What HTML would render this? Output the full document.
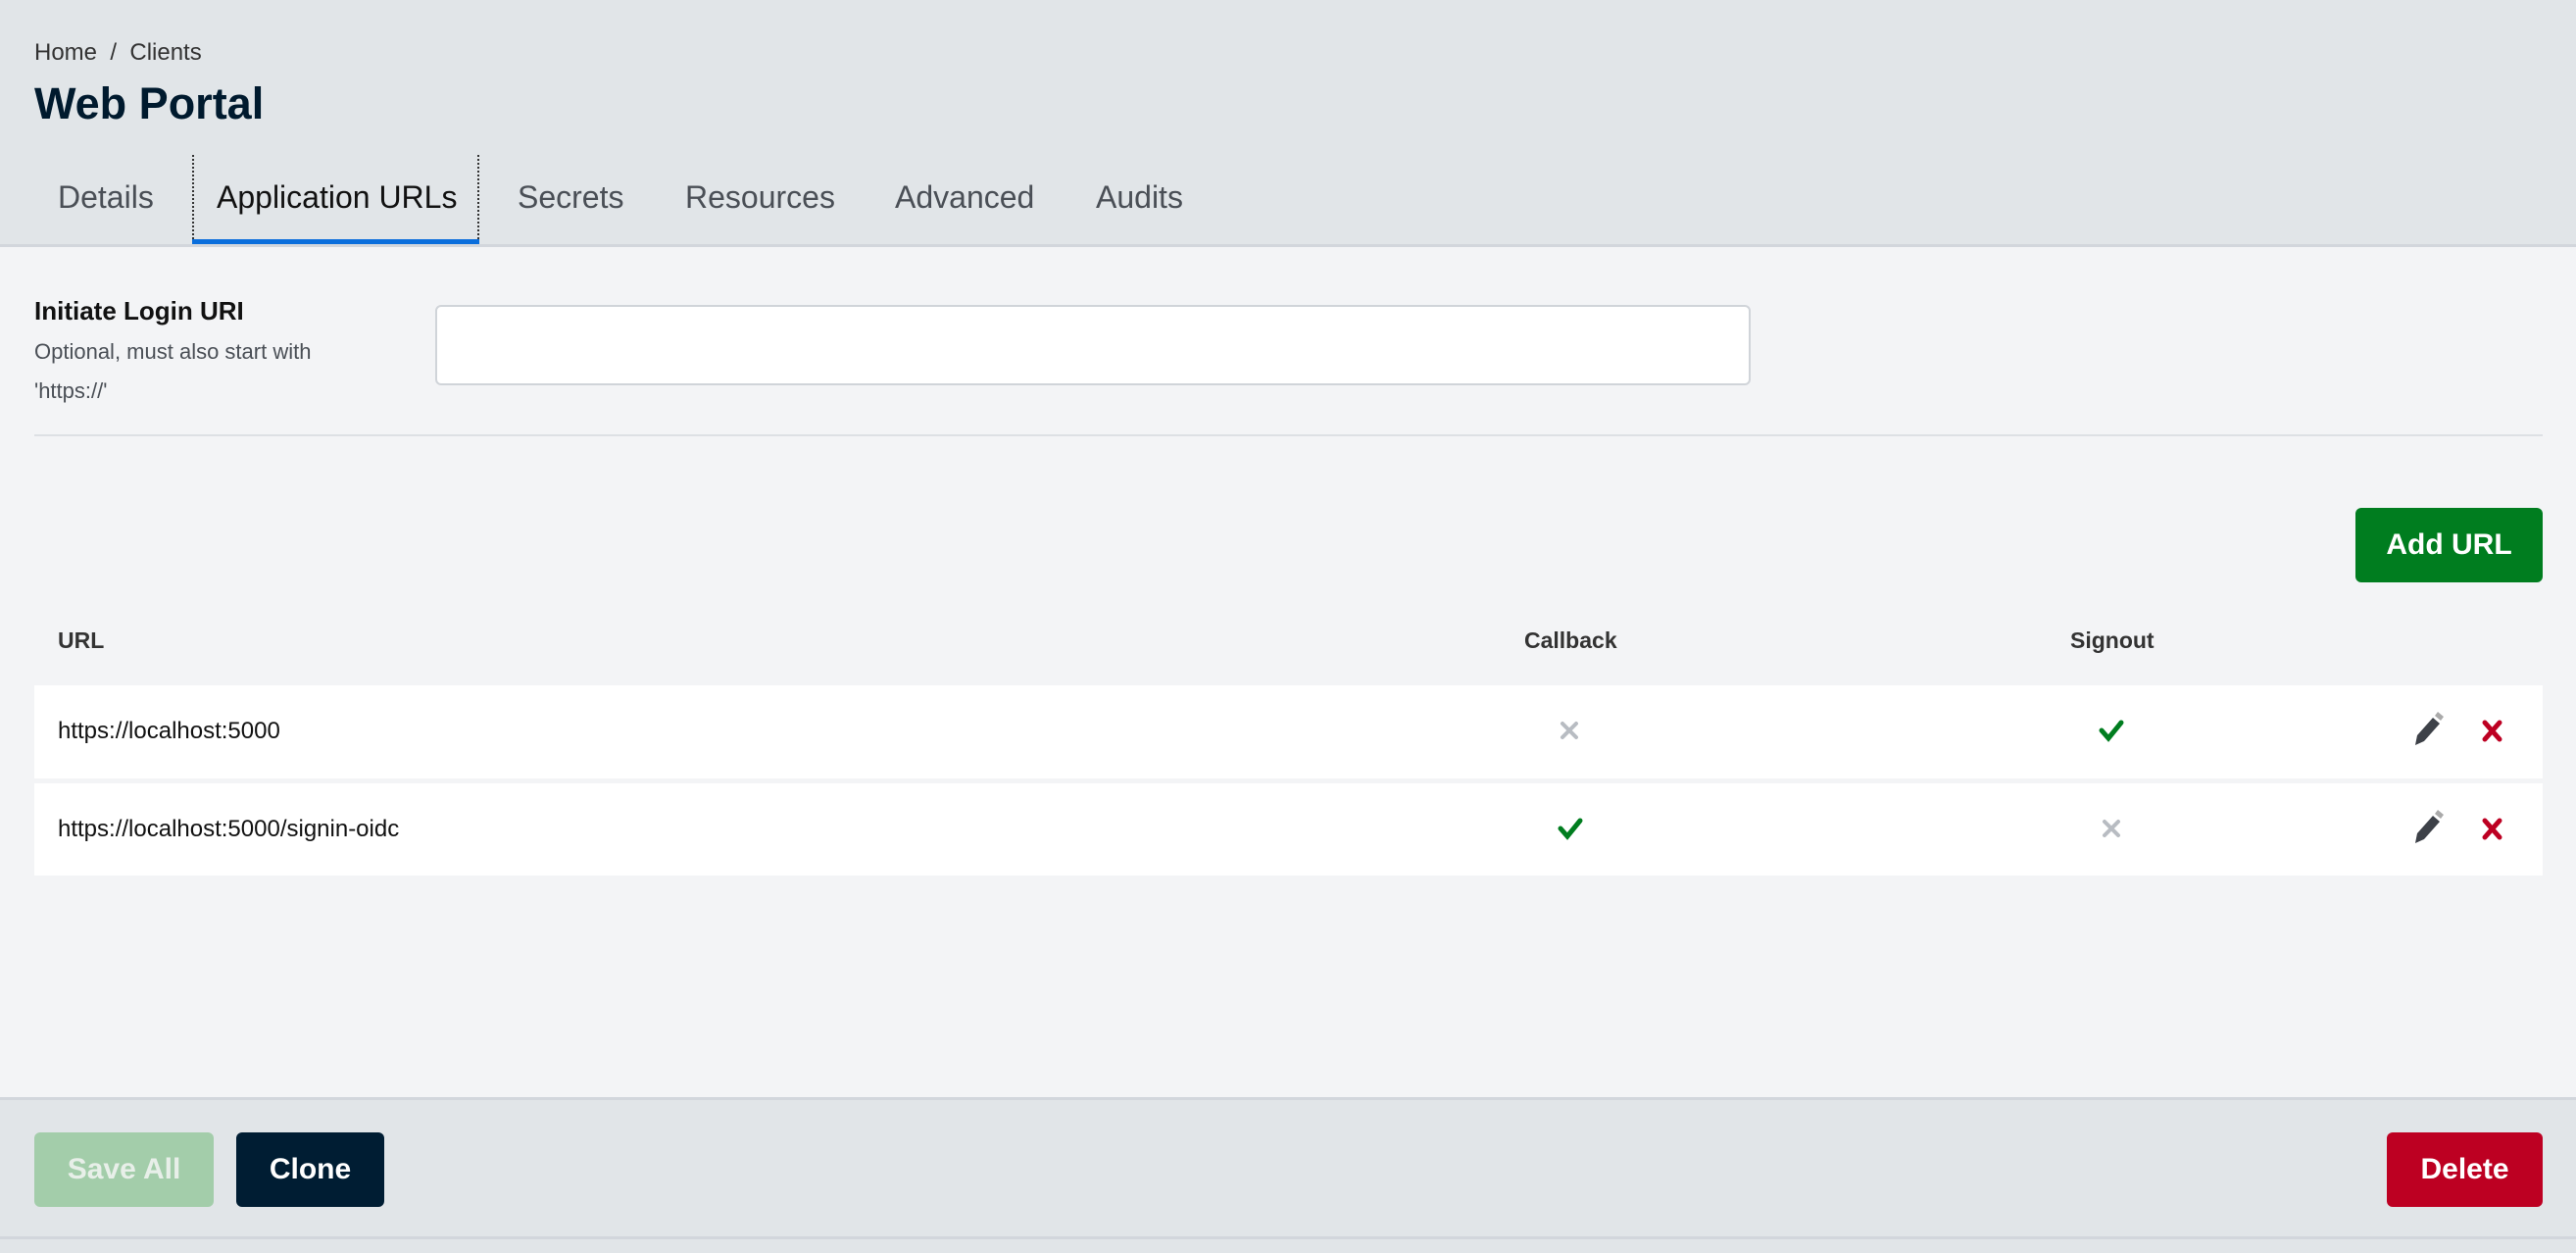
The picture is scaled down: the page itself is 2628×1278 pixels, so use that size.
<!DOCTYPE html>
<html><head><meta charset="utf-8"><style>
*{box-sizing:border-box;margin:0;padding:0}
body{width:2628px;height:1278px;font-family:"Liberation Sans",Arial,sans-serif;background:#e1e5e8;position:relative;overflow:hidden;color:#001a2e}
.abs{position:absolute;white-space:nowrap}
#hdr{position:absolute;left:0;top:0;width:2628px;height:252px;background:#e1e5e8;border-bottom:3px solid #d2d6dc}
#main{position:absolute;left:0;top:252px;width:2628px;height:868px;background:#f3f4f6}
#foot{position:absolute;left:0;top:1119px;width:2628px;height:145px;background:#e1e5e8;border-top:3px solid #d2d6dc;border-bottom:3px solid #d2d6dc}
.tab{position:absolute;top:183px;font-size:32px;color:#4a4f56}
.btn{position:absolute;color:#fff;font-weight:bold;font-size:30px;border-radius:6px;display:flex;align-items:center;justify-content:center}
.th{position:absolute;top:640px;font-size:23px;font-weight:bold;color:#333}
.row{position:absolute;left:35px;width:2559px;background:#fff}
.url{position:absolute;left:24px;font-size:24px;color:#111}
</style></head><body>
<div id="hdr"></div>
<div class="abs" style="left:35px;top:40px;font-size:24px;color:#333">Home &nbsp;/&nbsp; Clients</div>
<div class="abs" style="left:35px;top:80px;font-size:45px;font-weight:bold;color:#001a2e">Web Portal</div>
<div class="tab" style="left:59px">Details</div>
<div style="position:absolute;left:196px;top:158px;width:293px;height:90px;border-left:2px dotted #333;border-right:2px dotted #333"></div>
<div style="position:absolute;left:196px;top:244px;width:293px;height:5px;background:#0a6edc"></div>
<div class="tab" style="left:221px;color:#111">Application URLs</div>
<div class="tab" style="left:528px">Secrets</div>
<div class="tab" style="left:699px">Resources</div>
<div class="tab" style="left:913px">Advanced</div>
<div class="tab" style="left:1118px">Audits</div>
<div id="main"></div>
<div class="abs" style="left:35px;top:302px;font-size:26px;font-weight:bold;color:#111">Initiate Login URI</div>
<div class="abs" style="left:35px;top:339px;font-size:22px;color:#4a4f56;line-height:40px;white-space:normal;width:340px">Optional, must also start with 'https://'</div>
<div style="position:absolute;left:444px;top:311px;width:1342px;height:82px;background:#fff;border:2px solid #d0d4d9;border-radius:6px"></div>
<div style="position:absolute;left:35px;top:443px;width:2559px;height:2px;background:#dde0e4"></div>
<div class="btn" style="left:2403px;top:518px;width:191px;height:76px;background:#007d1f">Add URL</div>
<div class="th" style="left:59px">URL</div>
<div class="th" style="left:1555px">Callback</div>
<div class="th" style="left:2112px">Signout</div>
<div class="row" style="top:699px;height:95px"><div class="url" style="top:33px">https://localhost:5000</div></div>
<div class="row" style="top:799px;height:94px"><div class="url" style="top:33px">https://localhost:5000/signin-oidc</div></div>
<svg style="position:absolute;left:0;top:0" width="2628" height="1278">
<g stroke="#b8bcc2" stroke-width="4" stroke-linecap="round"><path d="M1594 738l14 14M1608 738l-14 14"/><path d="M2147 838l14 14M2161 838l-14 14"/></g>
<g stroke="#007d1f" stroke-width="5" fill="none" stroke-linecap="round"><path d="M2144 745l7 8 13-16"/><path d="M1592 845l7 8 13-16"/></g>
<g fill="#3d4148"><path d="M2464 760l2-10 16-18 7 6-16 18z"/><path d="M2464 860l2-10 16-18 7 6-16 18z"/></g>
<g fill="#aaa"><path d="M2484 730l3-4 6 5-3 4z"/><path d="M2484 830l3-4 6 5-3 4z"/></g>
<g stroke="#bd0022" stroke-width="5" stroke-linecap="round"><path d="M2535 737l15 17M2550 737l-15 17"/><path d="M2535 837l15 17M2550 837l-15 17"/></g>
</svg>
<div id="foot"></div>
<div class="btn" style="left:35px;top:1155px;width:183px;height:76px;background:#a3cdaa;color:#e8efe9">Save All</div>
<div class="btn" style="left:241px;top:1155px;width:151px;height:76px;background:#001d33">Clone</div>
<div class="btn" style="left:2435px;top:1155px;width:159px;height:76px;background:#bd0022">Delete</div>
</body></html>
